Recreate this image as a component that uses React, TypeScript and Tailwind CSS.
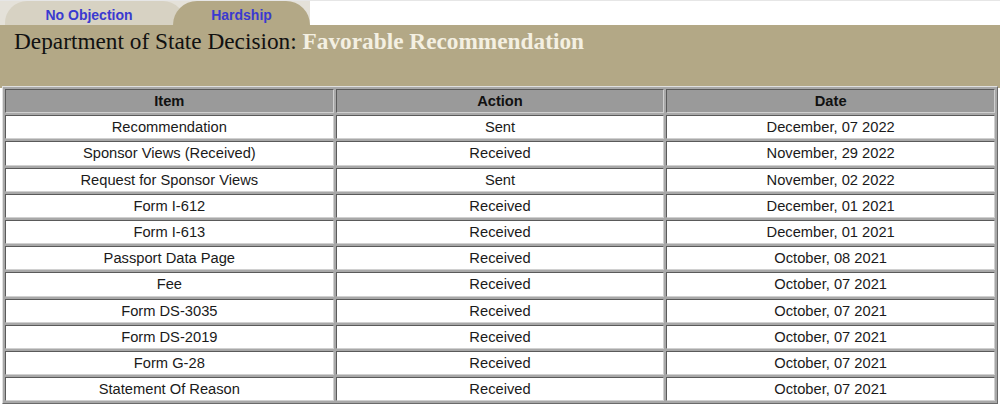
import React from "react";

const rows: [string, string, string][] = [
  ["Recommendation", "Sent", "December, 07 2022"],
  ["Sponsor Views (Received)", "Received", "November, 29 2022"],
  ["Request for Sponsor Views", "Sent", "November, 02 2022"],
  ["Form I-612", "Received", "December, 01 2021"],
  ["Form I-613", "Received", "December, 01 2021"],
  ["Passport Data Page", "Received", "October, 08 2021"],
  ["Fee", "Received", "October, 07 2021"],
  ["Form DS-3035", "Received", "October, 07 2021"],
  ["Form DS-2019", "Received", "October, 07 2021"],
  ["Form G-28", "Received", "October, 07 2021"],
  ["Statement Of Reason", "Received", "October, 07 2021"],
];

const cell =
  "h-[24.2px] p-0 text-center align-middle border border-t-[#5a5a5a] border-l-[#5a5a5a] border-b-[#d0d0d0] border-r-[#d0d0d0]";

export default function App() {
  return (
    <div className="w-[1000px] h-[408px] bg-white overflow-hidden font-['Liberation_Sans',Arial,sans-serif]">
      {/* tabs */}
      <div className="flex h-[25px] border-t border-[#e6e6e6]">
        <div className="flex w-[310px] bg-[#e4e1d9] pl-[5px]">
          <div className="w-[180px] h-[24px] rounded-t-[22px] bg-[#d7d2c3] flex items-center justify-center text-[14px] leading-[16px] pt-[3px] font-bold text-[#3a3ad0] pr-[12px]">
            No Objection
          </div>
          <div className="-ml-[12px] w-[137px] h-[24px] rounded-t-[24px] bg-[#b3a886] flex items-center justify-center text-[14px] leading-[16px] pt-[3px] font-bold text-[#3a3ad0]">
            Hardship
          </div>
        </div>
        <div className="flex-1 bg-white" />
      </div>
      {/* header panel */}
      <div className="h-[63px] bg-[#b3a886] pl-[14px] pt-[3px] font-['Liberation_Serif','Times_New_Roman',serif] text-[23.3px] leading-[26px] text-[#111]">
        Department of State Decision:{" "}
        <span className="font-bold text-[#f4f0e2]">Favorable Recommendation</span>
      </div>
      {/* table */}
      <div className="px-[2px]">
        <table className="w-[996px] border-separate border-spacing-[2px] bg-[#a8a8a8] border border-t-[#e0e0e0] border-l-[#e0e0e0] border-b-[#6a6a6a] border-r-[#6a6a6a] -mt-[2px] text-[14.7px] text-[#1a1a1a] table-fixed">
          <thead>
            <tr>
              <th className={cell + " bg-[#9a9a9a] font-bold text-[#111]"}>Item</th>
              <th className={cell + " bg-[#9a9a9a] font-bold text-[#111]"}>Action</th>
              <th className={cell + " bg-[#9a9a9a] font-bold text-[#111]"}>Date</th>
            </tr>
          </thead>
          <tbody>
            {rows.map((r, i) => (
              <tr key={i}>
                <td className={cell + " bg-white"}>{r[0]}</td>
                <td className={cell + " bg-white"}>{r[1]}</td>
                <td className={cell + " bg-white"}>{r[2]}</td>
              </tr>
            ))}
          </tbody>
        </table>
      </div>
    </div>
  );
}
